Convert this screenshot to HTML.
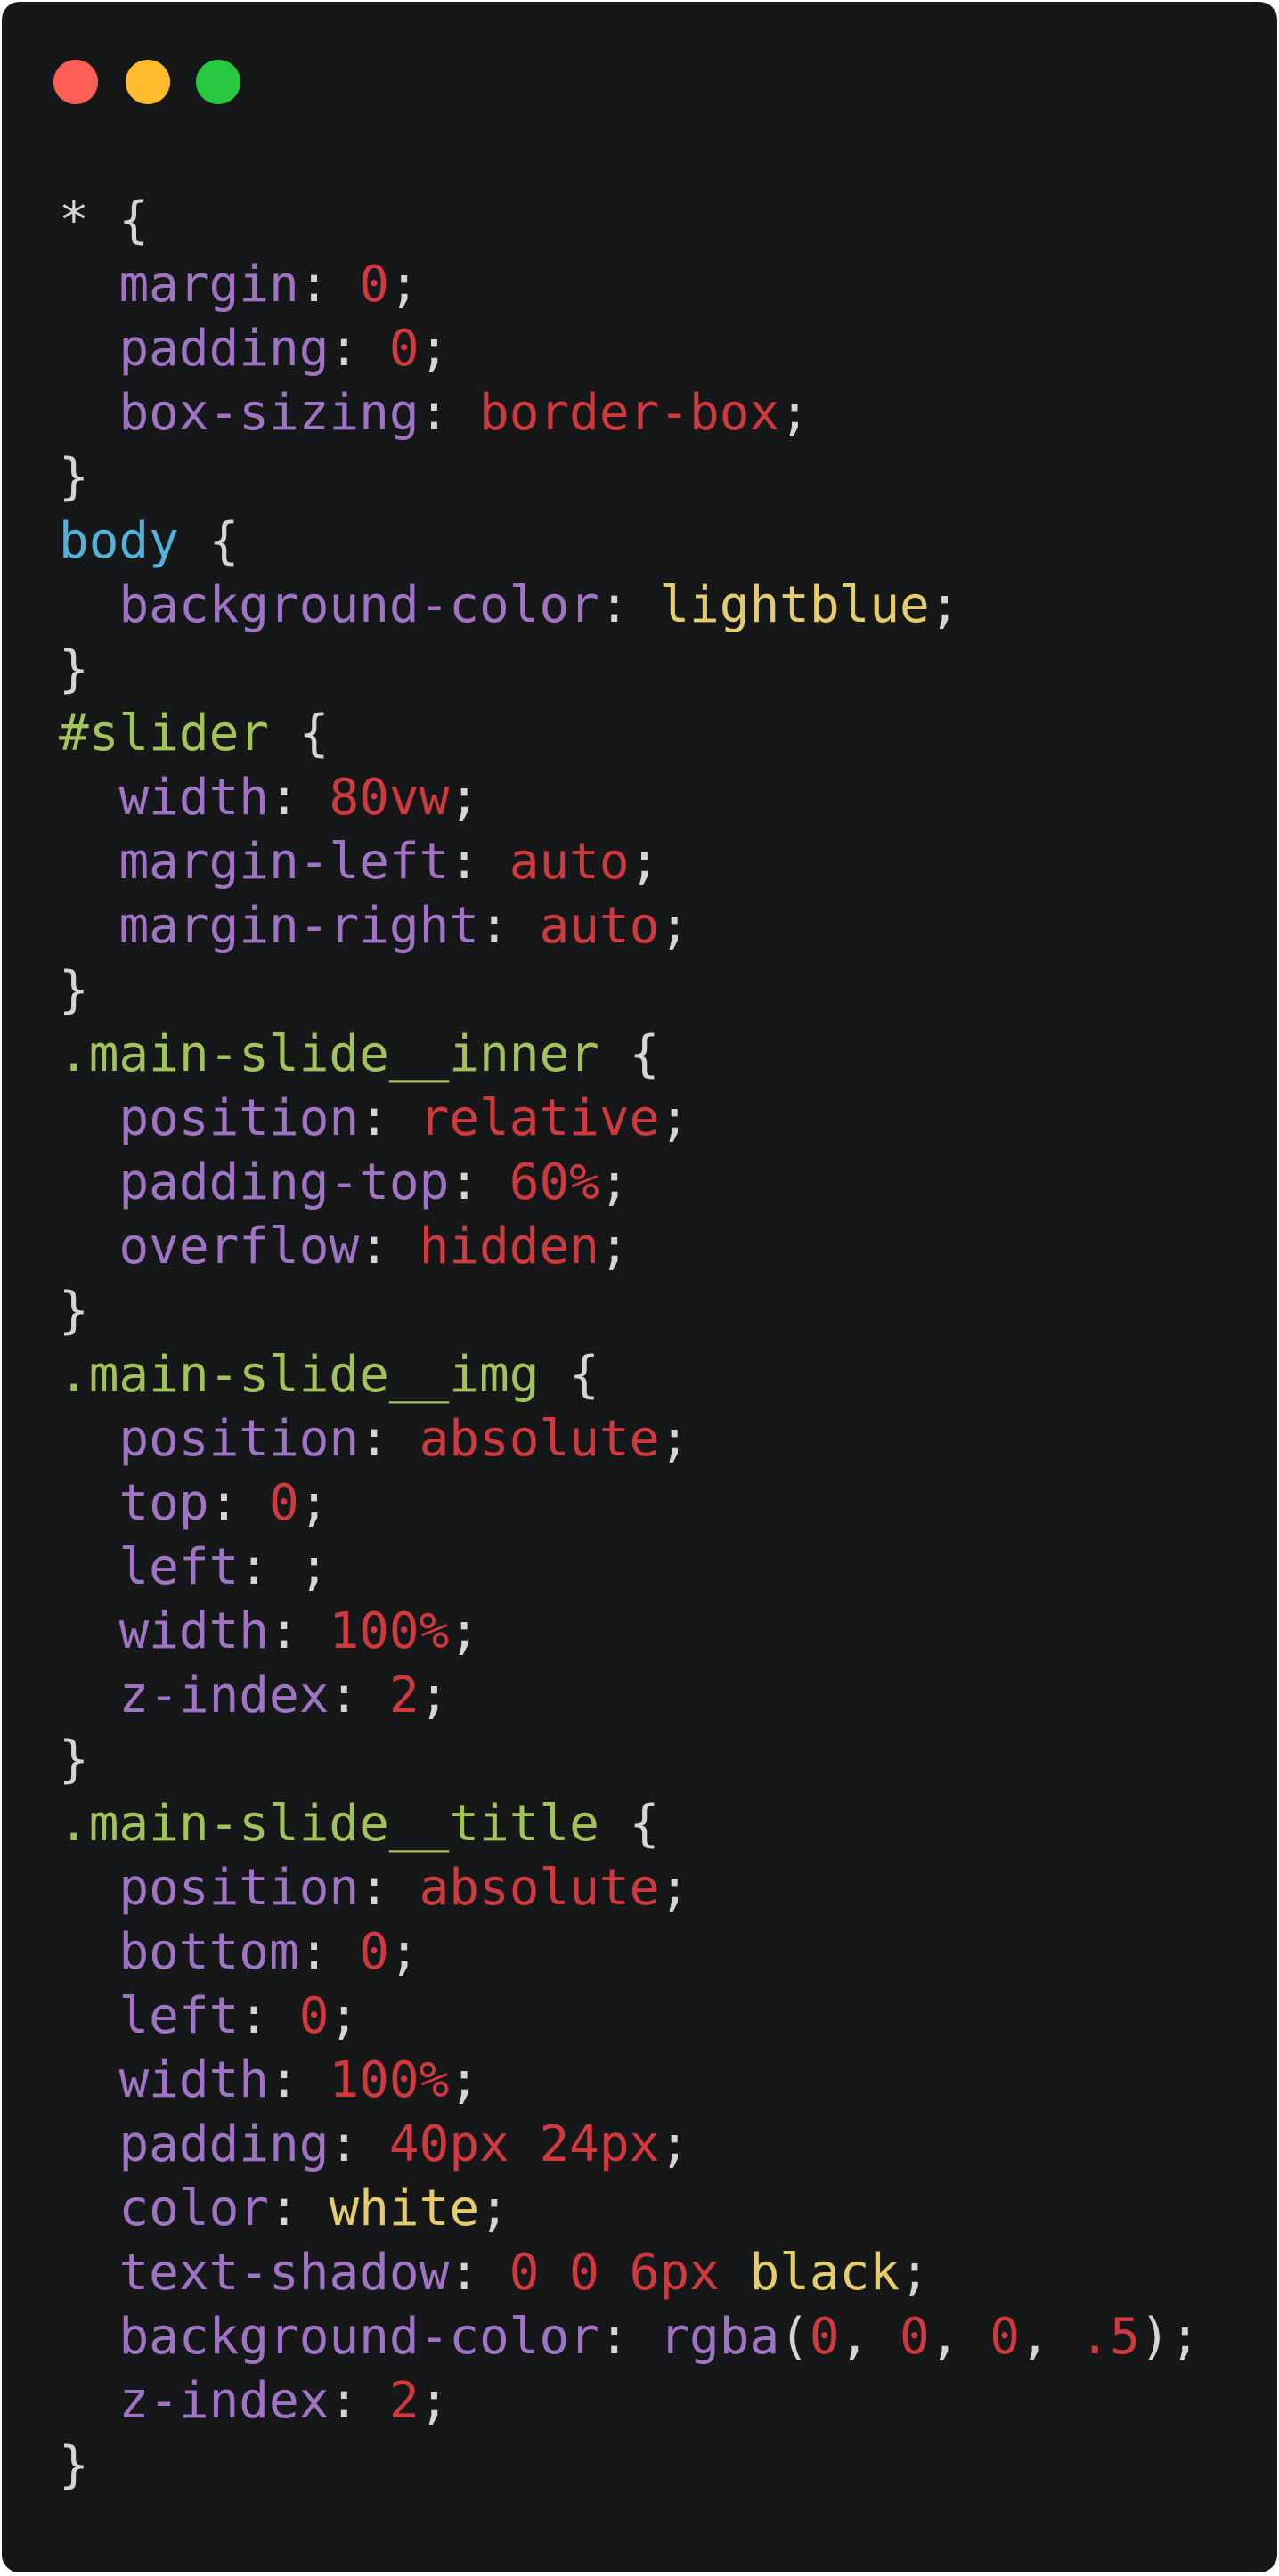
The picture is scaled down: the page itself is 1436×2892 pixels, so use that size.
<!DOCTYPE html>
<html><head><meta charset="utf-8"><style>
html,body{margin:0;padding:0;background:#fff;}
body{width:1436px;height:2892px;position:relative;overflow:hidden;}
.box{position:absolute;left:2px;top:2px;width:1432px;height:2886px;background:#161719;border-radius:20px;}
.dot{position:absolute;top:65px;width:50px;height:50px;border-radius:50%;}
pre{position:absolute;left:64px;top:210px;margin:0;font-family:"DejaVu Sans Mono","Liberation Mono",monospace;font-size:56px;line-height:72px;color:#d5d5d5;}
.p{color:#a074c4}.r{color:#d0393e}.y{color:#e5cd6b}.g{color:#a2c35a}.b{color:#52b2d8}
</style></head><body>
<div class="box">
<div class="dot" style="left:58px;background:#ff5f57"></div>
<div class="dot" style="left:139px;background:#febc2e"></div>
<div class="dot" style="left:218px;background:#27c840"></div>
<pre>* {
  <span class="p">margin</span>: <span class="r">0</span>;
  <span class="p">padding</span>: <span class="r">0</span>;
  <span class="p">box-sizing</span>: <span class="r">border-box</span>;
}
<span class="b">body</span> {
  <span class="p">background-color</span>: <span class="y">lightblue</span>;
}
<span class="g">#slider</span> {
  <span class="p">width</span>: <span class="r">80vw</span>;
  <span class="p">margin-left</span>: <span class="r">auto</span>;
  <span class="p">margin-right</span>: <span class="r">auto</span>;
}
<span class="g">.main-slide__inner</span> {
  <span class="p">position</span>: <span class="r">relative</span>;
  <span class="p">padding-top</span>: <span class="r">60%</span>;
  <span class="p">overflow</span>: <span class="r">hidden</span>;
}
<span class="g">.main-slide__img</span> {
  <span class="p">position</span>: <span class="r">absolute</span>;
  <span class="p">top</span>: <span class="r">0</span>;
  <span class="p">left</span>: ;
  <span class="p">width</span>: <span class="r">100%</span>;
  <span class="p">z-index</span>: <span class="r">2</span>;
}
<span class="g">.main-slide__title</span> {
  <span class="p">position</span>: <span class="r">absolute</span>;
  <span class="p">bottom</span>: <span class="r">0</span>;
  <span class="p">left</span>: <span class="r">0</span>;
  <span class="p">width</span>: <span class="r">100%</span>;
  <span class="p">padding</span>: <span class="r">40px 24px</span>;
  <span class="p">color</span>: <span class="y">white</span>;
  <span class="p">text-shadow</span>: <span class="r">0 0 6px</span> <span class="y">black</span>;
  <span class="p">background-color</span>: <span class="p">rgba</span>(<span class="r">0</span>, <span class="r">0</span>, <span class="r">0</span>, <span class="r">.5</span>);
  <span class="p">z-index</span>: <span class="r">2</span>;
}</pre>
</div>
</body></html>
